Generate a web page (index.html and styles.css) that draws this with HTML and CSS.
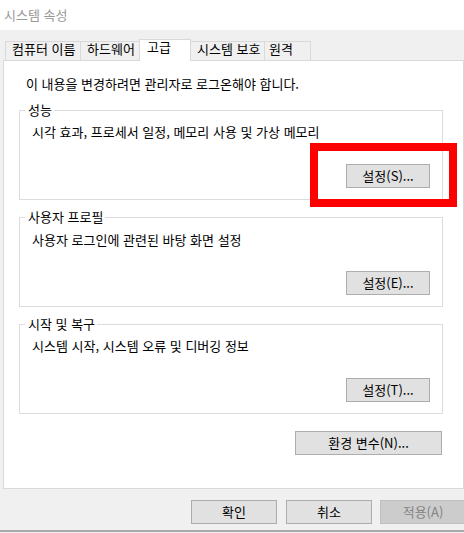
FILE: index.html
```html
<!DOCTYPE html>
<html lang="ko">
<head>
<meta charset="utf-8">
<title>시스템 속성</title>
<link rel="stylesheet" href="styles.css">
</head>
<body>
<div class="window">
  <div class="titlebar">시스템 속성</div>
  <div class="tabs">
    <div class="tab tab-1">컴퓨터 이름</div>
    <div class="tab tab-2">하드웨어</div>
    <div class="tab tab-3 selected">고급</div>
    <div class="tab tab-4">시스템 보호</div>
    <div class="tab tab-5">원격</div>
  </div>
  <div class="panel">
    <div class="notice">이 내용을 변경하려면 관리자로 로그온해야 합니다.</div>
    <div class="group">
      <div class="legend">성능</div>
      <div class="desc">시각 효과, 프로세서 일정, 메모리 사용 및 가상 메모리</div>
      <button class="btn btn-set">설정(S)...</button>
    </div>
    <div class="group group-profile">
      <div class="legend">사용자 프로필</div>
      <div class="desc">사용자 로그인에 관련된 바탕 화면 설정</div>
      <button class="btn btn-set">설정(E)...</button>
    </div>
    <div class="group">
      <div class="legend">시작 및 복구</div>
      <div class="desc">시스템 시작, 시스템 오류 및 디버깅 정보</div>
      <button class="btn btn-set">설정(T)...</button>
    </div>
    <button class="btn btn-env">환경 변수(N)...</button>
  </div>
  <div class="actions">
    <button class="btn btn-action">확인</button>
    <button class="btn btn-action btn-cancel">취소</button>
    <button class="btn btn-action" disabled>적용(A)</button>
  </div>
  <div class="bottom-edge"></div>
  <div class="highlight"></div>
</div>
</body>
</html>
```

FILE: styles.css
```css
html, body {
  margin: 0;
  padding: 0;
}

body {
  width: 464px;
  height: 533px;
  overflow: hidden;
  font-family: "Noto Sans CJK KR", "Noto Sans", sans-serif;
  font-size: 13px;
  color: #000;
  background: #f0f0f0;
}

.window {
  position: relative;
  width: 464px;
  height: 533px;
  background: #f0f0f0;
  overflow: hidden;
}

.titlebar {
  height: 30px;
  line-height: 30px;
  padding-left: 4px;
  background: #ffffff;
  color: #999999;
}

.tabs {
  display: flex;
  align-items: flex-end;
  height: 22px;
  margin: 9px 0 -1px 5px;
}

.tab {
  box-sizing: border-box;
  height: 19px;
  margin-bottom: 1px;
  margin-left: -1px;
  padding-left: 6px;
  line-height: 14px;
  border: 1px solid #d9d9d9;
  border-bottom: none;
  background: #f0f0f0;
  white-space: nowrap;
}

.tab-1 { width: 76px; margin-left: 0; }
.tab-2 { width: 60px; }
.tab-3 { width: 52px; }
.tab-4 { width: 75px; }
.tab-5 { width: 47px; padding-left: 4px; }

.tab.selected {
  position: relative;
  z-index: 2;
  height: 22px;
  margin-bottom: 0;
  padding-left: 7px;
  background: #ffffff;
}

.panel {
  box-sizing: border-box;
  display: flex;
  flex-direction: column;
  width: 461px;
  height: 429px;
  margin-left: 3px;
  padding-left: 15px;
  border: 1px solid #d9d9d9;
  background: #ffffff;
}

.notice {
  line-height: 16px;
  margin: 15px 0 0 7px;
  white-space: nowrap;
}

.group {
  box-sizing: border-box;
  display: flex;
  flex-direction: column;
  width: 424px;
  height: 90px;
  margin-top: 17px;
  padding: 0 12px;
  border: 1px solid #dcdcdc;
}

.notice + .group {
  margin-top: 18px;
}

.legend {
  align-self: flex-start;
  line-height: 16px;
  margin: -9px 0 0 -7px;
  padding: 0 2px 0 3px;
  background: #ffffff;
  white-space: nowrap;
}

.desc {
  line-height: 16px;
  margin-top: 6px;
  white-space: nowrap;
}

.group-profile .desc {
  margin-top: 7px;
}

.group-profile .btn-set {
  margin-top: 23px;
}

.btn {
  box-sizing: border-box;
  height: 24px;
  padding: 0;
  margin: 0;
  font-family: "Noto Sans CJK KR", "Noto Sans", sans-serif;
  font-size: 13px;
  line-height: 22px;
  color: #000;
  background: #e1e1e1;
  border: 1px solid #adadad;
  border-radius: 0;
  white-space: nowrap;
}

.btn-set {
  align-self: flex-end;
  width: 84px;
  margin-top: 24px;
}

.btn-env {
  align-self: flex-end;
  width: 147px;
  margin: 17px 21px 0 0;
}

.actions {
  display: flex;
  justify-content: flex-end;
  gap: 8px;
  margin: 11px -2px 0 0;
}

.btn-action {
  width: 86px;
  flex: none;
}

.btn-cancel {
  margin-left: 1px;
}

.btn[disabled] {
  background: #cccccc;
  border-color: #bfbfbf;
  color: #838383;
}

.bottom-edge {
  height: 2px;
  margin-top: 6px;
  background: #a8a8a8;
}

.highlight {
  position: absolute;
  left: 310px;
  top: 143px;
  box-sizing: border-box;
  width: 147px;
  height: 64px;
  border: 8px solid #ff0000;
}
```
